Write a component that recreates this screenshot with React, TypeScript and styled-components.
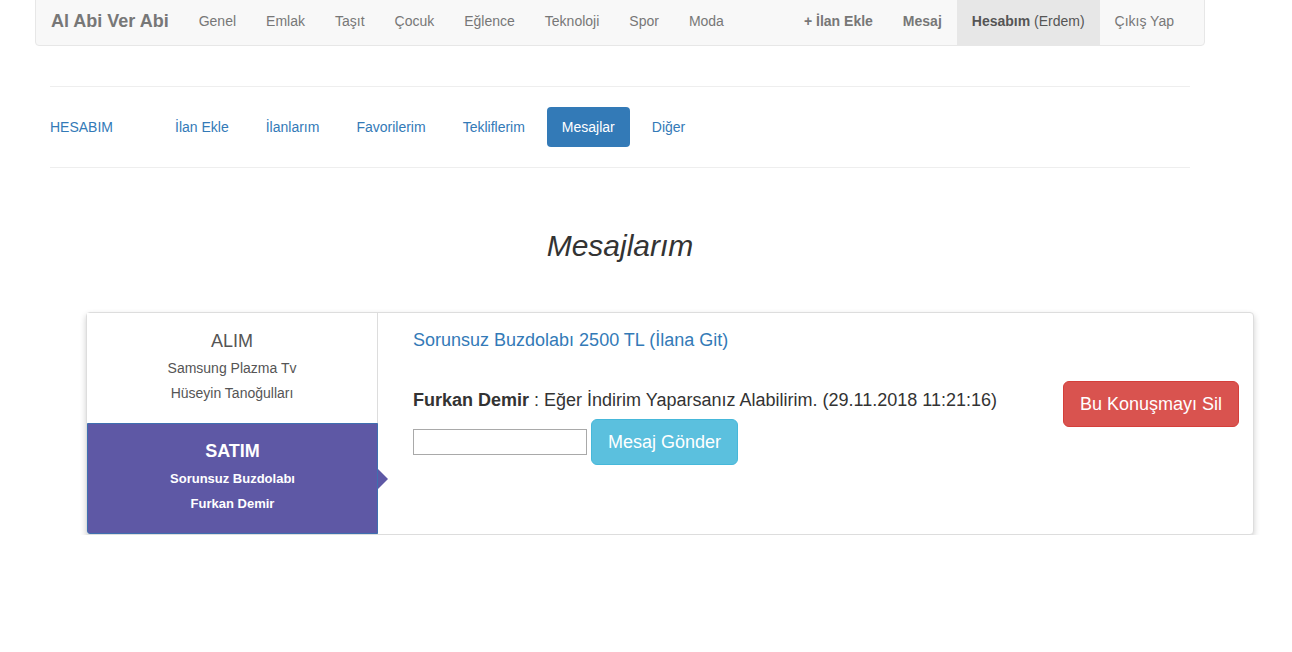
import React from "react";
import styled, { createGlobalStyle } from "styled-components";

const GlobalStyle = createGlobalStyle`
  html, body { margin: 0; padding: 0; background: #fff; }
  body {
    font-family: "Liberation Sans", Helvetica, Arial, sans-serif;
    font-size: 14px;
    line-height: 1.42857;
    color: #333;
  }
  * { box-sizing: border-box; }
`;

const Page = styled.div`
  width: 1170px;
  margin-left: 35px;
`;

const Navbar = styled.nav`
  margin-top: -5px;
  height: 51px;
  display: flex;
  align-items: stretch;
  background: #f8f8f8;
  border: 1px solid #e7e7e7;
  border-radius: 4px;
`;

const Brand = styled.a`
  padding: 15px 15px;
  font-size: 18px;
  line-height: 20px;
  font-weight: bold;
  color: #777;
  text-decoration: none;
`;

const NavGroup = styled.div<{ $right?: boolean }>`
  display: flex;
  align-items: stretch;
  margin-left: ${(p) => (p.$right ? "auto" : "0")};
  margin-right: ${(p) => (p.$right ? "15px" : "0")};
`;

const NavLink = styled.a<{ $bold?: boolean; $active?: boolean }>`
  display: block;
  padding: 15px;
  line-height: 20px;
  font-size: 14px;
  color: ${(p) => (p.$active ? "#555" : "#777")};
  background: ${(p) => (p.$active ? "#e7e7e7" : "transparent")};
  font-weight: ${(p) => (p.$bold ? "bold" : "normal")};
  text-decoration: none;
  white-space: nowrap;
`;

const Strong = styled.b`
  font-weight: bold;
`;

const SubNav = styled.div`
  margin: 40px 15px 0;
  padding: 20px 0;
  border-top: 1px solid #eee;
  border-bottom: 1px solid #eee;
  display: flex;
  align-items: center;
`;

const SubLabel = styled.a`
  width: 110px;
  color: #337ab7;
  text-decoration: none;
  line-height: 20px;
`;

const Pills = styled.div`
  display: flex;
  gap: 7px;
`;

const Pill = styled.a<{ $active?: boolean }>`
  display: block;
  padding: 10px 15px;
  line-height: 20px;
  border-radius: 4px;
  color: ${(p) => (p.$active ? "#fff" : "#337ab7")};
  background: ${(p) => (p.$active ? "#337ab7" : "transparent")};
  text-decoration: none;
`;

const Title = styled.h1`
  margin: 61px 0 0;
  font-size: 30px;
  line-height: 33px;
  font-style: italic;
  font-weight: normal;
  text-align: center;
  color: #333;
`;

const Card = styled.div`
  margin: 50px 0 0 51px;
  width: 1168px;
  height: 223px;
  display: flex;
  background: #fff;
  border: 1px solid #ddd;
  border-radius: 4px;
  box-shadow: 0 3px 6px rgba(0, 0, 0, 0.2);
`;

const ConvList = styled.div`
  width: 291px;
  flex: none;
  display: flex;
  flex-direction: column;
  border-right: 1px solid #ddd;
`;

const ConvItem = styled.div<{ $active?: boolean }>`
  position: relative;
  height: ${(p) => (p.$active ? "111px" : "110px")};
  padding-top: 18px;
  text-align: center;
  background: ${(p) => (p.$active ? "#5e58a5" : "#fff")};
  color: ${(p) => (p.$active ? "#fff" : "#555")};
  border: ${(p) => (p.$active ? "1px solid #3f6fb0" : "none")};
  margin-right: ${(p) => (p.$active ? "-1px" : "0")};
  border-bottom-left-radius: ${(p) => (p.$active ? "3px" : "0")};
  ${(p) =>
    p.$active &&
    `
    padding-top: 17px;
    &::after {
      content: "";
      position: absolute;
      right: -11px;
      top: 45px;
      border-top: 10px solid transparent;
      border-bottom: 10px solid transparent;
      border-left: 10px solid #5e58a5;
    }
  `}
`;

const ConvKind = styled.div<{ $active?: boolean }>`
  font-size: 18px;
  line-height: 20px;
  margin-bottom: 5px;
  font-weight: ${(p) => (p.$active ? "bold" : "normal")};
`;

const ConvLine = styled.div<{ $active?: boolean }>`
  font-size: ${(p) => (p.$active ? "13px" : "14px")};
  line-height: 25px;
  font-weight: ${(p) => (p.$active ? "bold" : "normal")};
`;

const Detail = styled.div`
  flex: 1;
  padding: 15px 14px 0 35px;
  display: flex;
  flex-direction: column;
`;

const AdLink = styled.a`
  font-size: 18px;
  line-height: 25.7px;
  color: #337ab7;
  text-decoration: none;
`;

const MessageRow = styled.div`
  margin-top: 27px;
  display: flex;
  justify-content: space-between;
  align-items: flex-start;
`;

const MessageBlock = styled.div`
  padding-top: 7px;
`;

const MessageText = styled.div`
  font-size: 18px;
  line-height: 25.7px;
  color: #333;
`;

const SendRow = styled.div`
  margin-top: 6px;
  display: flex;
  align-items: center;
  gap: 4px;
`;

const TextInput = styled.input`
  width: 174px;
  height: 26px;
  border: 1px solid #a9a9a9;
  padding: 1px 2px;
  font-family: inherit;
`;

const Button = styled.button<{ $variant: "info" | "danger" }>`
  padding: 10px 16px;
  font-family: inherit;
  font-size: 18px;
  line-height: 24px;
  border-radius: 6px;
  color: #fff;
  cursor: pointer;
  white-space: nowrap;
  background: ${(p) => (p.$variant === "info" ? "#5bc0de" : "#d9534f")};
  border: 1px solid ${(p) => (p.$variant === "info" ? "#46b8da" : "#d43f3a")};
`;

export default function App() {
  return (
    <>
      <GlobalStyle />
      <Page>
        <Navbar>
          <Brand href="#">Al Abi Ver Abi</Brand>
          <NavGroup>
            {["Genel", "Emlak", "Taşıt", "Çocuk", "Eğlence", "Teknoloji", "Spor", "Moda"].map((c) => (
              <NavLink key={c} href="#">
                {c}
              </NavLink>
            ))}
          </NavGroup>
          <NavGroup $right>
            <NavLink href="#" $bold>
              + İlan Ekle
            </NavLink>
            <NavLink href="#" $bold>
              Mesaj
            </NavLink>
            <NavLink href="#" $active>
              <Strong>Hesabım</Strong> (Erdem)
            </NavLink>
            <NavLink href="#">Çıkış Yap</NavLink>
          </NavGroup>
        </Navbar>

        <SubNav>
          <SubLabel href="#">HESABIM</SubLabel>
          <Pills>
            <Pill href="#">İlan Ekle</Pill>
            <Pill href="#">İlanlarım</Pill>
            <Pill href="#">Favorilerim</Pill>
            <Pill href="#">Tekliflerim</Pill>
            <Pill href="#" $active>
              Mesajlar
            </Pill>
            <Pill href="#">Diğer</Pill>
          </Pills>
        </SubNav>

        <Title>Mesajlarım</Title>

        <Card>
          <ConvList>
            <ConvItem>
              <ConvKind>ALIM</ConvKind>
              <ConvLine>Samsung Plazma Tv</ConvLine>
              <ConvLine>Hüseyin Tanoğulları</ConvLine>
            </ConvItem>
            <ConvItem $active>
              <ConvKind $active>SATIM</ConvKind>
              <ConvLine $active>Sorunsuz Buzdolabı</ConvLine>
              <ConvLine $active>Furkan Demir</ConvLine>
            </ConvItem>
          </ConvList>
          <Detail>
            <AdLink href="#">Sorunsuz Buzdolabı 2500 TL (İlana Git)</AdLink>
            <MessageRow>
              <MessageBlock>
                <MessageText>
                  <Strong>Furkan Demir</Strong> : Eğer İndirim Yaparsanız Alabilirim. (29.11.2018 11:21:16)
                </MessageText>
                <SendRow>
                  <TextInput type="text" />
                  <Button $variant="info">Mesaj Gönder</Button>
                </SendRow>
              </MessageBlock>
              <Button $variant="danger">Bu Konuşmayı Sil</Button>
            </MessageRow>
          </Detail>
        </Card>
      </Page>
    </>
  );
}
